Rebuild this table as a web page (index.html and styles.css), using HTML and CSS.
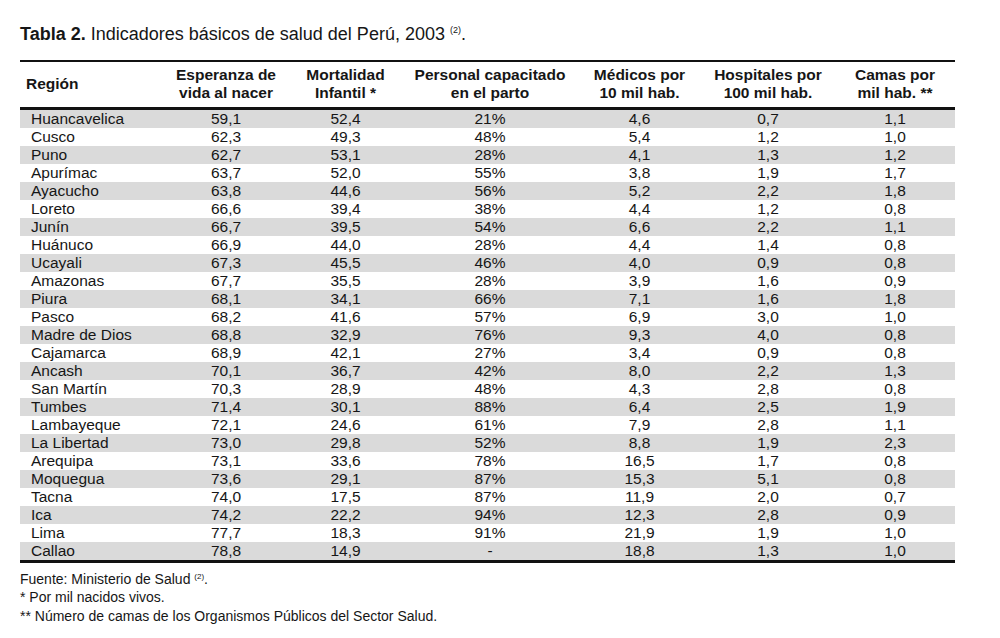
FILE: index.html
```html
<!DOCTYPE html>
<html lang="es">
<head>
<meta charset="utf-8">
<title>Tabla 2</title>
<link rel="stylesheet" href="styles.css">
</head>
<body>
<div class="page">
  <h1 class="title"><b>Tabla 2.</b> Indicadores básicos de salud del Perú, 2003 <sup class="ref">(2)</sup>.</h1>
  <table class="data">
    <colgroup>
      <col class="c1"><col class="c2"><col class="c3"><col class="c4"><col class="c5"><col class="c6"><col class="c7">
    </colgroup>
    <thead>
      <tr>
        <th class="reg">Región</th>
        <th>Esperanza de<br>vida al nacer</th>
        <th>Mortalidad<br>Infantil *</th>
        <th>Personal capacitado<br>en el parto</th>
        <th>Médicos por<br>10 mil hab.</th>
        <th>Hospitales por<br>100 mil hab.</th>
        <th class="last">Camas por<br>mil hab. **</th>
      </tr>
    </thead>
    <tbody>
      <tr><td>Huancavelica</td><td>59,1</td><td>52,4</td><td>21%</td><td>4,6</td><td>0,7</td><td>1,1</td></tr>
      <tr><td>Cusco</td><td>62,3</td><td>49,3</td><td>48%</td><td>5,4</td><td>1,2</td><td>1,0</td></tr>
      <tr><td>Puno</td><td>62,7</td><td>53,1</td><td>28%</td><td>4,1</td><td>1,3</td><td>1,2</td></tr>
      <tr><td>Apurímac</td><td>63,7</td><td>52,0</td><td>55%</td><td>3,8</td><td>1,9</td><td>1,7</td></tr>
      <tr><td>Ayacucho</td><td>63,8</td><td>44,6</td><td>56%</td><td>5,2</td><td>2,2</td><td>1,8</td></tr>
      <tr><td>Loreto</td><td>66,6</td><td>39,4</td><td>38%</td><td>4,4</td><td>1,2</td><td>0,8</td></tr>
      <tr><td>Junín</td><td>66,7</td><td>39,5</td><td>54%</td><td>6,6</td><td>2,2</td><td>1,1</td></tr>
      <tr><td>Huánuco</td><td>66,9</td><td>44,0</td><td>28%</td><td>4,4</td><td>1,4</td><td>0,8</td></tr>
      <tr><td>Ucayali</td><td>67,3</td><td>45,5</td><td>46%</td><td>4,0</td><td>0,9</td><td>0,8</td></tr>
      <tr><td>Amazonas</td><td>67,7</td><td>35,5</td><td>28%</td><td>3,9</td><td>1,6</td><td>0,9</td></tr>
      <tr><td>Piura</td><td>68,1</td><td>34,1</td><td>66%</td><td>7,1</td><td>1,6</td><td>1,8</td></tr>
      <tr><td>Pasco</td><td>68,2</td><td>41,6</td><td>57%</td><td>6,9</td><td>3,0</td><td>1,0</td></tr>
      <tr><td>Madre de Dios</td><td>68,8</td><td>32,9</td><td>76%</td><td>9,3</td><td>4,0</td><td>0,8</td></tr>
      <tr><td>Cajamarca</td><td>68,9</td><td>42,1</td><td>27%</td><td>3,4</td><td>0,9</td><td>0,8</td></tr>
      <tr><td>Ancash</td><td>70,1</td><td>36,7</td><td>42%</td><td>8,0</td><td>2,2</td><td>1,3</td></tr>
      <tr><td>San Martín</td><td>70,3</td><td>28,9</td><td>48%</td><td>4,3</td><td>2,8</td><td>0,8</td></tr>
      <tr><td>Tumbes</td><td>71,4</td><td>30,1</td><td>88%</td><td>6,4</td><td>2,5</td><td>1,9</td></tr>
      <tr><td>Lambayeque</td><td>72,1</td><td>24,6</td><td>61%</td><td>7,9</td><td>2,8</td><td>1,1</td></tr>
      <tr><td>La Libertad</td><td>73,0</td><td>29,8</td><td>52%</td><td>8,8</td><td>1,9</td><td>2,3</td></tr>
      <tr><td>Arequipa</td><td>73,1</td><td>33,6</td><td>78%</td><td>16,5</td><td>1,7</td><td>0,8</td></tr>
      <tr><td>Moquegua</td><td>73,6</td><td>29,1</td><td>87%</td><td>15,3</td><td>5,1</td><td>0,8</td></tr>
      <tr><td>Tacna</td><td>74,0</td><td>17,5</td><td>87%</td><td>11,9</td><td>2,0</td><td>0,7</td></tr>
      <tr><td>Ica</td><td>74,2</td><td>22,2</td><td>94%</td><td>12,3</td><td>2,8</td><td>0,9</td></tr>
      <tr><td>Lima</td><td>77,7</td><td>18,3</td><td>91%</td><td>21,9</td><td>1,9</td><td>1,0</td></tr>
      <tr><td>Callao</td><td>78,8</td><td>14,9</td><td>-</td><td>18,8</td><td>1,3</td><td>1,0</td></tr>
    </tbody>
  </table>
  <div class="notes">
    <p>Fuente: Ministerio de Salud <sup class="ref-sm">(2)</sup>.</p>
    <p>* Por mil nacidos vivos.</p>
    <p>** Número de camas de los Organismos Públicos del Sector Salud.</p>
  </div>
</div>
</body>
</html>
```

FILE: styles.css
```css
html, body {
  margin: 0;
  padding: 0;
  background: #ffffff;
}

body {
  font-family: "Liberation Sans", Arial, sans-serif;
  color: #161616;
}

.page {
  padding: 24px 45px 0 20px;
}

.title {
  margin: 0 0 16px 0;
  font-size: 18px;
  line-height: 20px;
  font-weight: normal;
  white-space: nowrap;
}

.title b {
  font-weight: bold;
}

.ref {
  font-size: 9px;
  vertical-align: 7px;
  line-height: 0;
}

.ref-sm {
  font-size: 8px;
  vertical-align: 5px;
  line-height: 0;
}

.data {
  width: 935px;
  border-collapse: collapse;
  table-layout: fixed;
  font-size: 15.5px;
  border-top: 2px solid #111;
  border-bottom: 3px solid #111;
}

.c1 { width: 146px; }
.c2 { width: 120px; }
.c3 { width: 119px; }
.c4 { width: 170px; }
.c5 { width: 129px; }
.c6 { width: 128px; }
.c7 { width: 123px; }

.data thead tr {
  height: 47px;
  border-bottom: 3px solid #111;
}

.data th {
  padding: 0;
  font-weight: bold;
  line-height: 18px;
  text-align: center;
  vertical-align: middle;
  white-space: nowrap;
}

.data th.reg {
  text-align: left;
  padding-left: 6px;
}

.data th.last,
.data td:last-child {
  padding-left: 3px;
}

.data tbody tr {
  height: 18px;
}

.data tbody tr:nth-child(odd) {
  background: #dadada;
}

.data td {
  padding: 0;
  height: 18px;
  line-height: 18px;
  text-align: center;
  white-space: nowrap;
}

.data td:first-child {
  text-align: left;
  padding-left: 11px;
}

.notes {
  margin-top: 7px;
  font-size: 14px;
  line-height: 18.5px;
}

.notes p {
  margin: 0;
}
```
